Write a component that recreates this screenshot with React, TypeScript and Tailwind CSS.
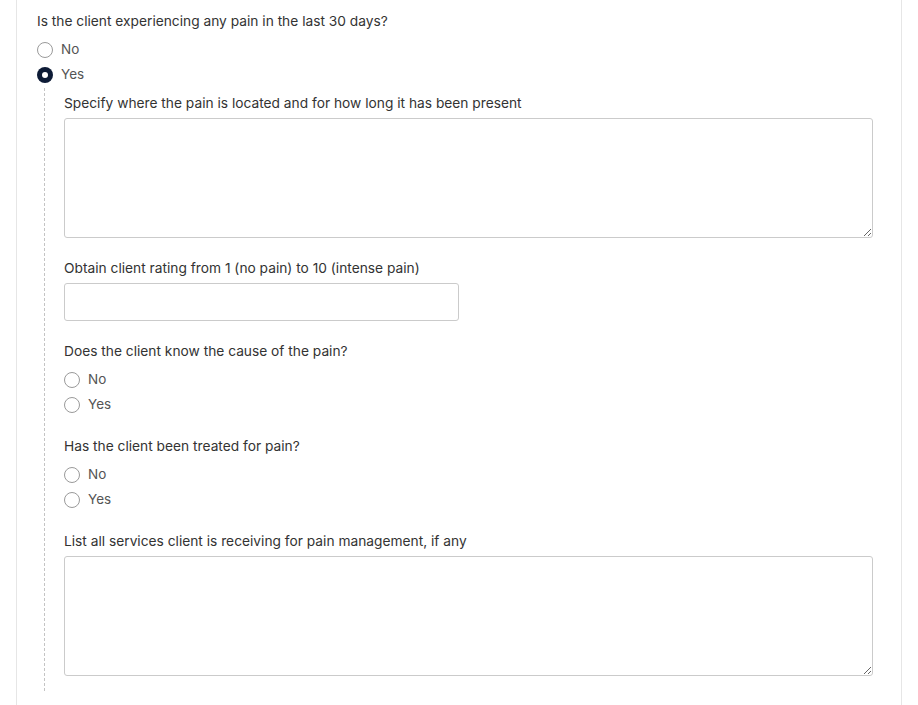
import React, { useState } from "react";

function Radio({ label, checked, onChange }: { label: string; checked: boolean; onChange: () => void }) {
  return (
    <label className="flex items-center gap-2 h-[25px] cursor-pointer" onClick={onChange}>
      {checked ? (
        <span className="w-4 h-4 rounded-full bg-[#0d1b36] flex items-center justify-center">
          <span className="w-[6px] h-[6px] rounded-full bg-white" />
        </span>
      ) : (
        <span className="w-4 h-4 rounded-full border border-[#9a9a9a] bg-white" />
      )}
      <span className="text-[13.5px] text-[#555]">{label}</span>
    </label>
  );
}

function YesNo({ value, setValue }: { value: string; setValue: (v: string) => void }) {
  return (
    <div className="flex flex-col mt-[6px]">
      <Radio label="No" checked={value === "no"} onChange={() => setValue("no")} />
      <Radio label="Yes" checked={value === "yes"} onChange={() => setValue("yes")} />
    </div>
  );
}

export default function App() {
  const [pain, setPain] = useState("yes");
  const [cause, setCause] = useState("");
  const [treated, setTreated] = useState("");

  return (
    <div className="min-h-screen bg-white font-['Inter',sans-serif] text-[#333]">
      <div className="ml-[16px] w-[886px] min-h-[705px] border-x border-[#e6e6e6] pl-[20px] pr-[27px] pt-[11px]">
        <p className="text-[13.75px] leading-5">Is the client experiencing any pain in the last 30 days?</p>
        <div className="mt-[6px]">
          <Radio label="No" checked={pain === "no"} onChange={() => setPain("no")} />
          <Radio label="Yes" checked={pain === "yes"} onChange={() => setPain("yes")} />
        </div>

        {/* Follow-up questions */}
        <div className="ml-[7px] mt-[1px] border-l border-dashed border-[#c4c4c4] pl-[19px] pt-[5px] pb-[15px]">
          <p className="text-[13.75px] leading-5">Specify where the pain is located and for how long it has been present</p>
          <textarea className="block mt-[5px] w-[809px] h-[120px] border border-[#cbcbcb] rounded-[3px] outline-none px-2 py-1 text-[14px]" />

          <p className="text-[13.75px] leading-5 mt-[20px]">Obtain client rating from 1 (no pain) to 10 (intense pain)</p>
          <input className="block mt-[5px] w-[395px] h-[38px] border border-[#cbcbcb] rounded-[3px] outline-none px-2 text-[14px]" />

          <p className="text-[13.75px] leading-5 mt-[20px]">Does the client know the cause of the pain?</p>
          <YesNo value={cause} setValue={setCause} />

          <p className="text-[13.75px] leading-5 mt-[19px]">Has the client been treated for pain?</p>
          <YesNo value={treated} setValue={setTreated} />

          <p className="text-[13.75px] leading-5 mt-[19px]">List all services client is receiving for pain management, if any</p>
          <textarea className="block mt-[5px] w-[809px] h-[120px] border border-[#cbcbcb] rounded-[3px] outline-none px-2 py-1 text-[14px]" />
        </div>
      </div>
    </div>
  );
}
